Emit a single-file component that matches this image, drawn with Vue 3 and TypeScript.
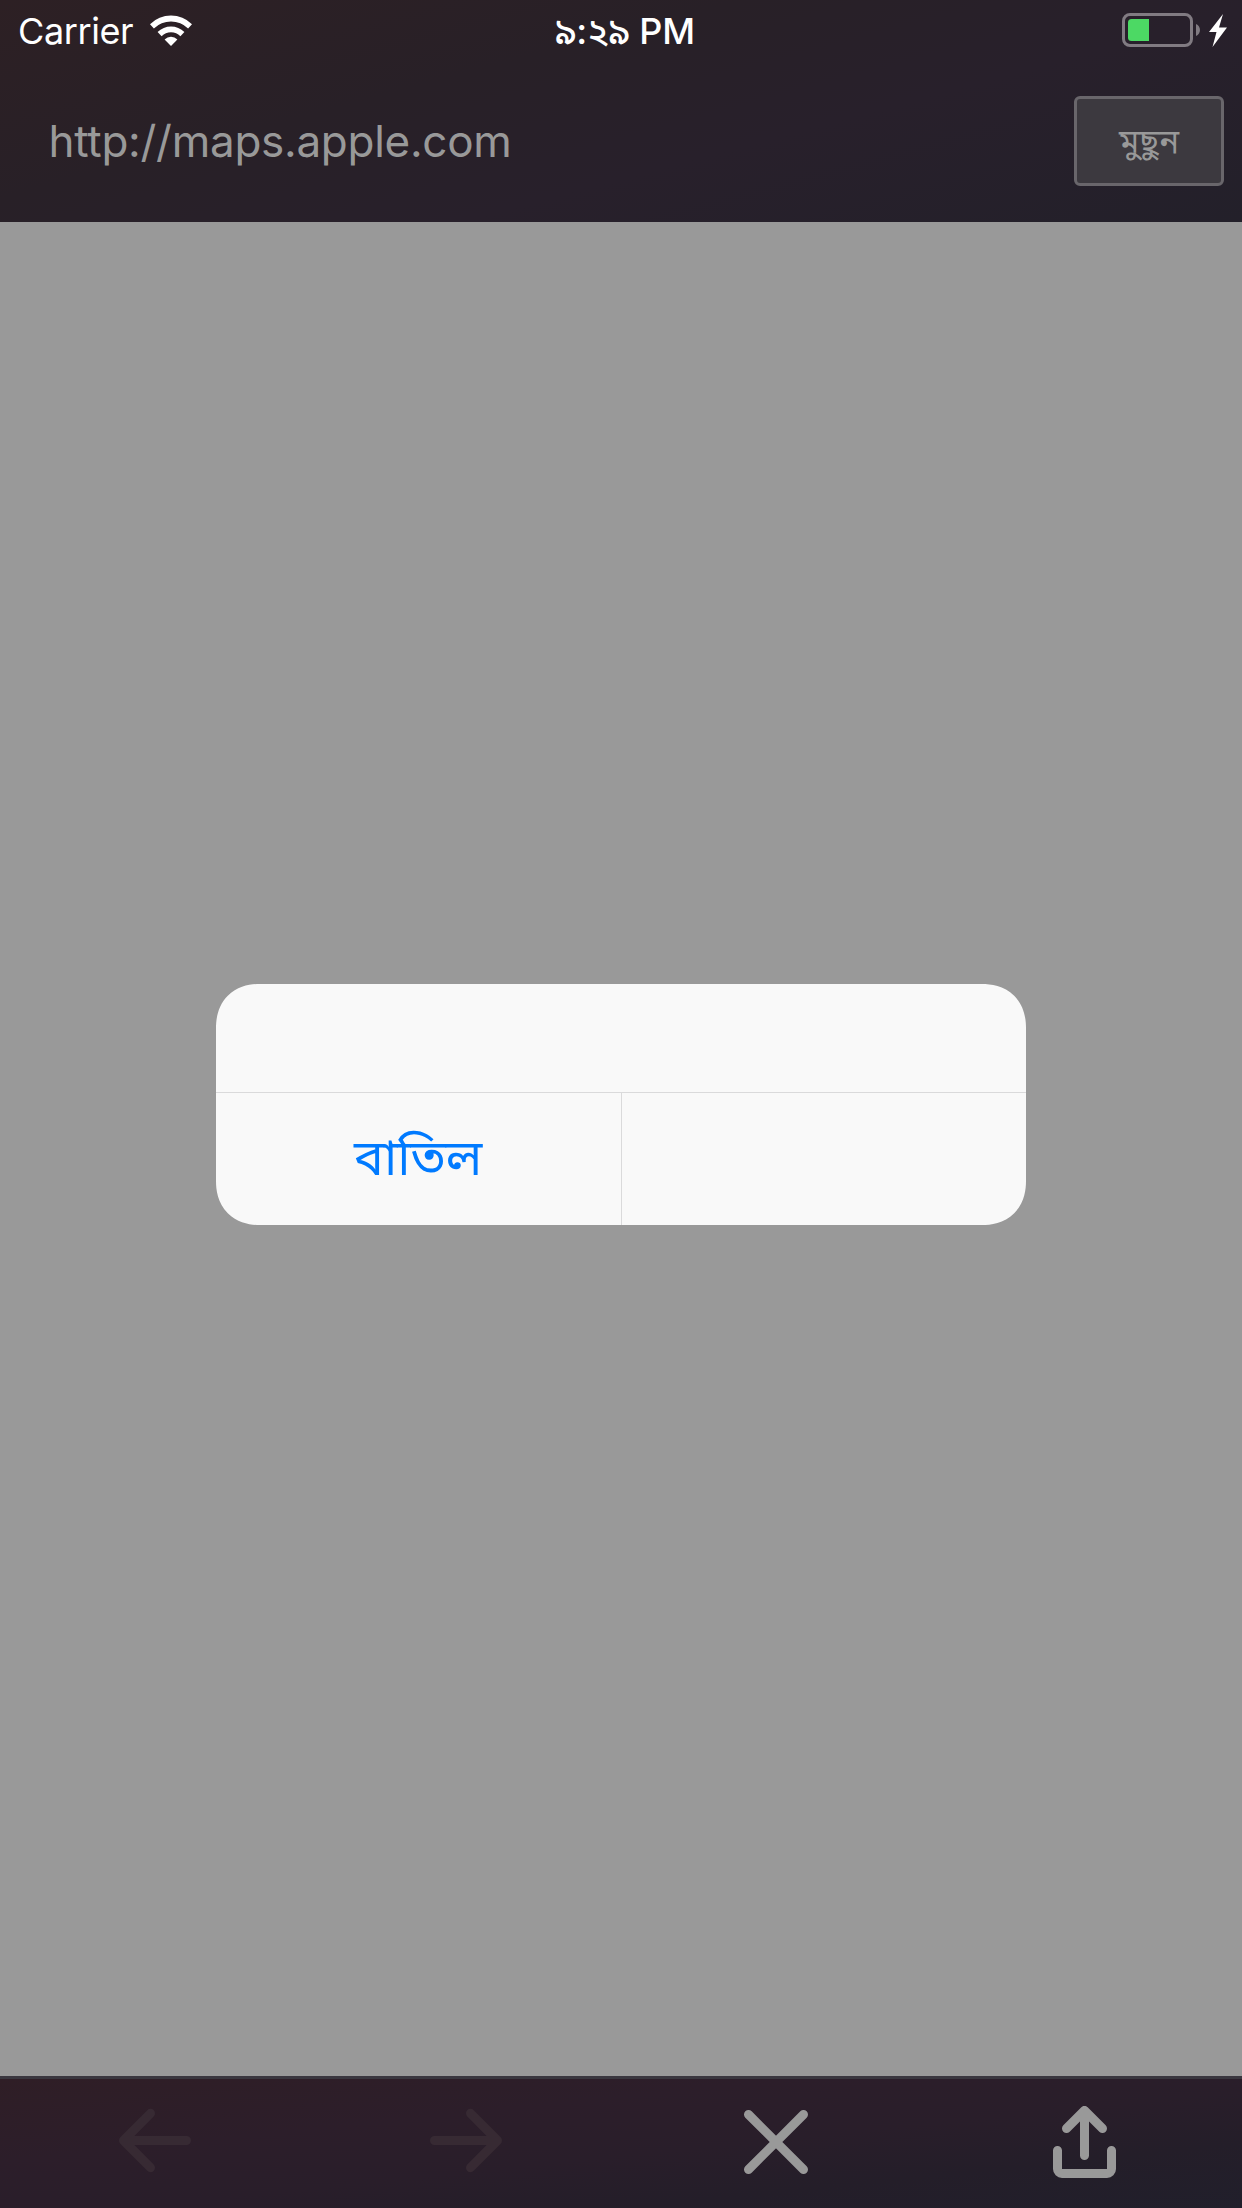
<script setup lang="ts">
const carrier = 'Carrier'
const time = '৯:২৯ PM'
const url = 'http://maps.apple.com'
const eraseLabel = 'মুছুন'
const cancelLabel = 'বাতিল'
</script>

<template>
  <div class="screen">
    <header class="top">
      <div class="status">
        <div class="side">
          <span class="carrier">{{ carrier }}</span>
          <svg class="wifi" width="42" height="31" viewBox="0 0 42 31">
            <path d="M0 9.2a30 30 0 0 1 42 0l-3.9 4.2a24.4 24.4 0 0 0-34.2 0z" />
            <path d="M7.6 17a19.2 19.2 0 0 1 26.8 0l-4 4.2a13.4 13.4 0 0 0-18.8 0z" />
            <path d="M14.6 24.4a9.2 9.2 0 0 1 12.8 0L21 31z" />
          </svg>
        </div>
        <span class="time">{{ time }}</span>
        <div class="side end">
          <svg width="106" height="35" viewBox="0 0 106 35">
            <rect x="1.5" y="1.5" width="68" height="31" rx="6.5" fill="none" stroke="#817b82" stroke-width="3" />
            <path d="M27 6v22H9.500a3.500 3.500 0 0 1-3.500-3.500v-15A3.500 3.500 0 0 1 9.500 6z" fill="#4cd964" />
            <path d="M74 11c5.300 2 5.300 10 0 12z" fill="#817b82" />
            <path d="M101 1L87 19h7.500L90.500 34 105 14.500H97z" fill="#fff" />
          </svg>
        </div>
      </div>
      <div class="address">
        <span class="url">{{ url }}</span>
        <button class="erase" type="button">{{ eraseLabel }}</button>
      </div>
    </header>

    <main class="content">
      <div class="dialog" role="dialog">
        <div class="message"></div>
        <div class="actions">
          <button class="action" type="button">{{ cancelLabel }}</button>
          <button class="action" type="button"></button>
        </div>
      </div>
    </main>

    <footer class="toolbar">
      <svg class="tool dim" width="80" height="80" viewBox="0 0 80 80">
        <path d="M71.500 40.500H8.500M35.500 13.300L8.500 40.500l27 27.200" />
      </svg>
      <svg class="tool dim" width="80" height="80" viewBox="0 0 80 80">
        <path d="M9.500 40.500h63M45.500 13.300l27 27.200-27 27.200" />
      </svg>
      <svg class="tool" width="80" height="80" viewBox="0 0 80 80">
        <path d="M13.500 14.500l55 55M68.500 14.500l-55 55" />
      </svg>
      <svg class="tool" width="80" height="80" viewBox="0 0 80 80">
        <path d="M39.500 55.500v-45M21.500 28.500l18-18 18 18M12.500 50.500v18.500a4.500 4.500 0 0 0 4.500 4.500h45a4.500 4.500 0 0 0 4.500-4.500V50.500" />
      </svg>
    </footer>
  </div>
</template>

<style>
body {
  margin: 0;
}
</style>

<style scoped>
.screen {
  width: 1242px;
  height: 2208px;
  display: flex;
  flex-direction: column;
  overflow: hidden;
  background: #999;
  font-family: Inter, "Noto Sans Bengali", "Noto Sans", sans-serif;
}
.top {
  height: 222px;
  flex: none;
  background: linear-gradient(165deg, #2d2024 0%, #282027 36%, #28202b 62%, #23202a 100%);
}
.status {
  height: 60px;
  display: flex;
  align-items: center;
  color: #fff;
}
.side {
  flex: 1;
  display: flex;
  align-items: center;
  padding-left: 18px;
}
.side.end {
  justify-content: flex-end;
  padding: 0 14px 0 0;
}
.carrier {
  font-size: 36px;
  letter-spacing: -0.4px;
  line-height: 60px;
  width: 132px;
  padding-top: 2px;
}
.wifi {
  fill: #fff;
}
.time {
  font-size: 36px;
  font-weight: 550;
  letter-spacing: -0.1px;
  line-height: 60px;
  white-space: nowrap;
  padding: 2px 0 0 4px;
}
.address {
  height: 162px;
  box-sizing: border-box;
  display: flex;
  align-items: flex-start;
  justify-content: space-between;
  padding: 36px 18px 0 48.5px;
}
.url {
  color: #999;
  font-size: 44px;
  letter-spacing: -0.27px;
  line-height: 90px;
}
.erase {
  width: 150px;
  height: 90px;
  box-sizing: border-box;
  border: 3px solid #69666b;
  border-radius: 6px;
  background: #3c393f;
  color: #999;
  font: inherit;
  font-size: 33px;
  padding: 4px 0 0;
}
.content {
  flex: 1;
  display: flex;
  align-items: flex-start;
  justify-content: center;
  padding-top: 762px;
}
.dialog {
  width: 810px;
  height: 241px;
  border-radius: 44px;
  corner-shape: superellipse(1.15);
  overflow: hidden;
  background: #f9f9f9;
}
.message {
  height: 108px;
  border-bottom: 1px solid #dadadb;
}
.actions {
  height: 132px;
  display: flex;
}
.action {
  flex: 1;
  border: 0;
  padding: 4px 0 0;
  background: none;
  color: #007aff;
  font: inherit;
  font-size: 50px;
}
.action + .action {
  border-left: 1px solid #dadadb;
}
.toolbar {
  height: 132px;
  flex: none;
  box-sizing: border-box;
  border-top: 3px solid #3a373f;
  display: flex;
  justify-content: space-between;
  padding: 21px 117px 0 115px;
  background: linear-gradient(174deg, #2f1e26 0%, #2c1e2a 32%, #291e2a 55%, #241e29 75%, #211f2b 100%);
}
.tool {
  fill: none;
  stroke: #999;
  stroke-width: 9;
  stroke-linecap: round;
  stroke-linejoin: round;
}
.dim {
  stroke: #372a33;
}
</style>
